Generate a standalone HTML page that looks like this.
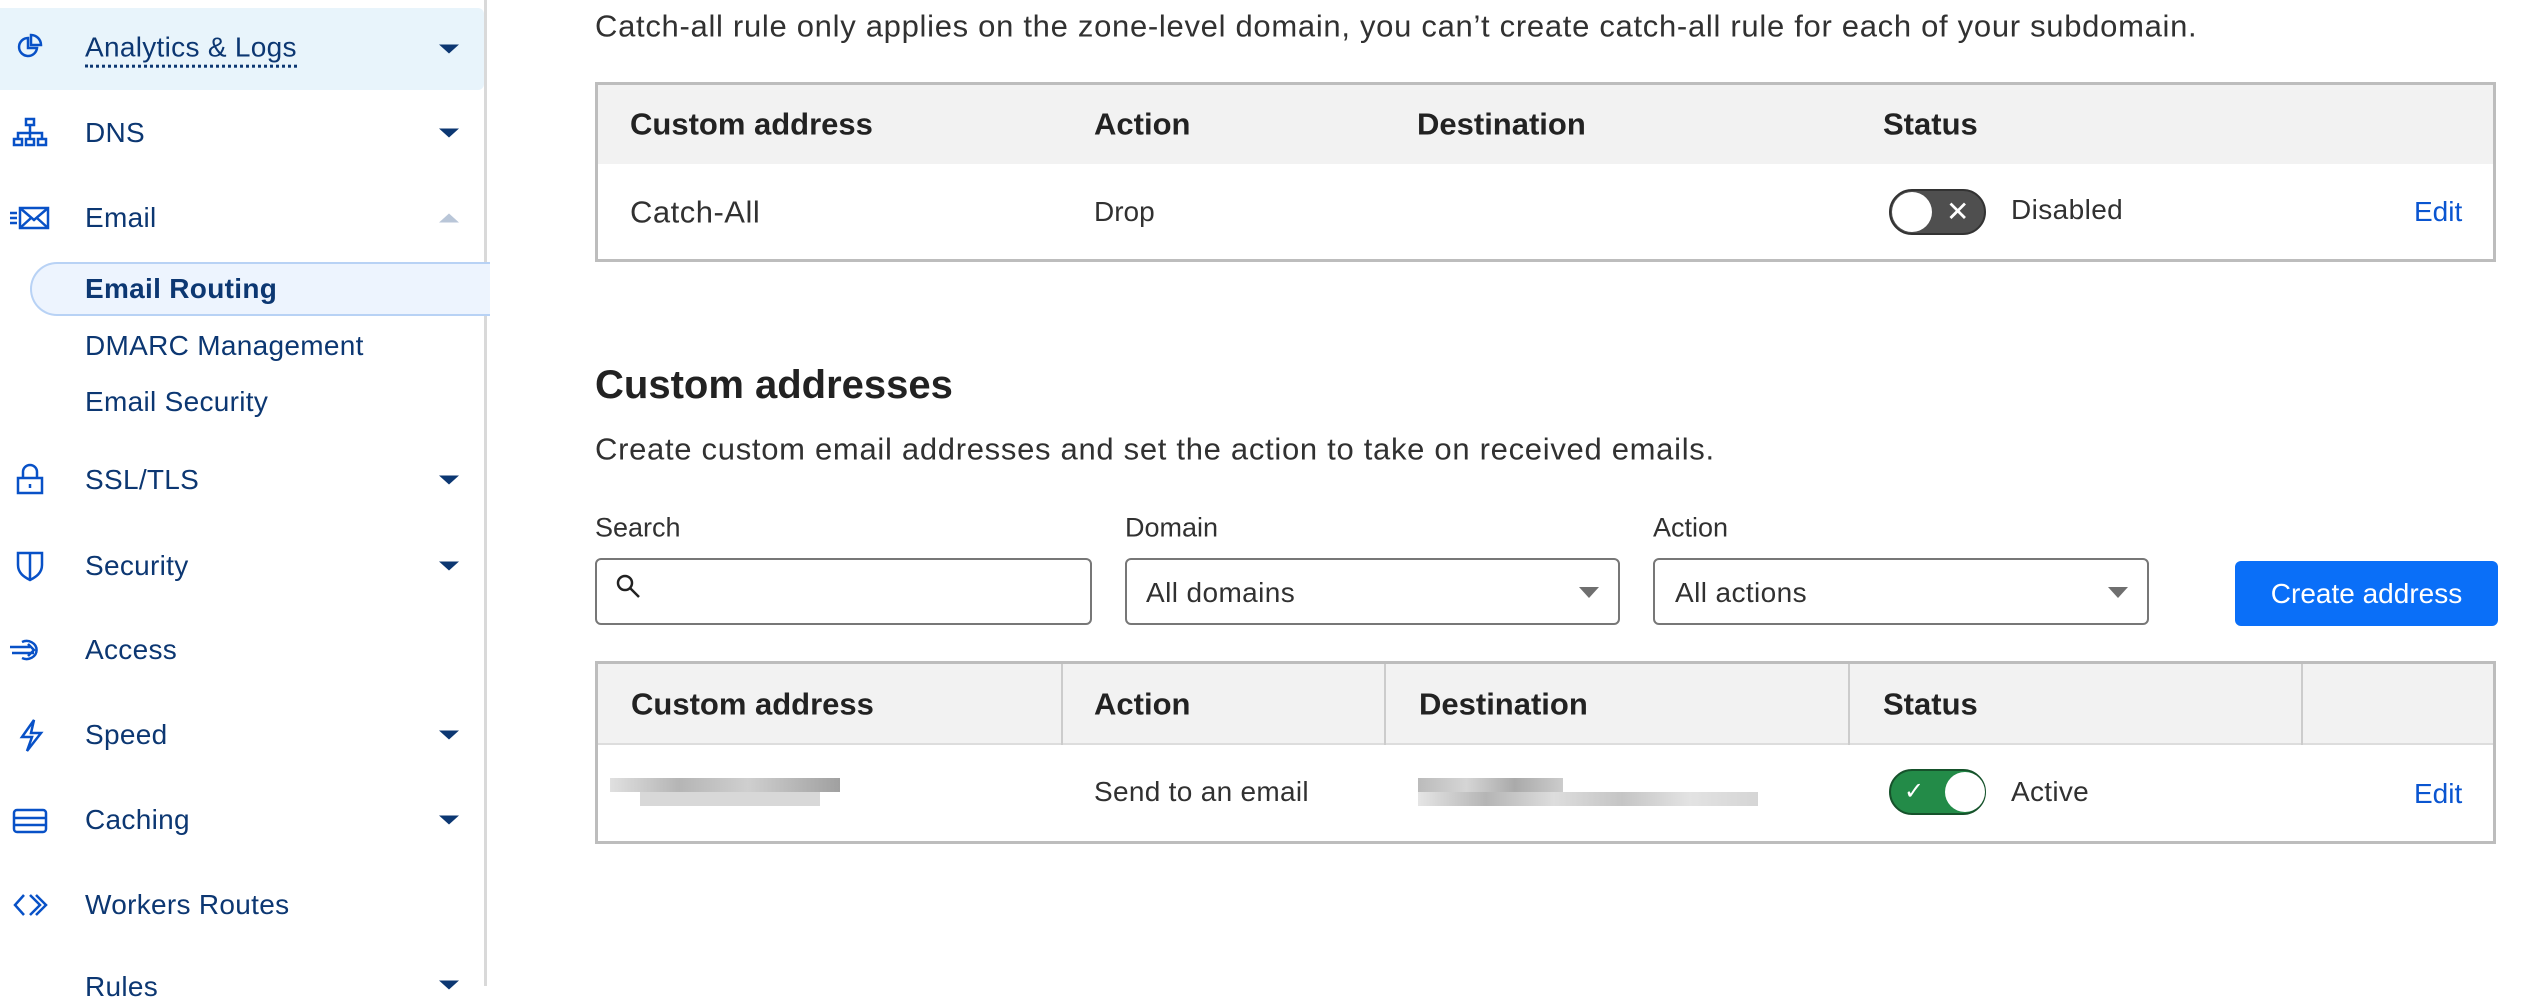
<!DOCTYPE html>
<html><head><meta charset="utf-8"><style>
*{margin:0;padding:0;box-sizing:border-box}
body{width:2546px;height:986px;overflow:hidden;background:#fff;font-family:"Liberation Sans",sans-serif;color:#313131;position:relative}
.a{position:absolute;white-space:nowrap}
.side{position:absolute;left:0;top:0;width:487px;height:986px;border-right:3px solid #d9d9d9;background:#fff}
.si{position:absolute;left:85px;font-size:28px;color:#0c3772;line-height:1;transform:translateY(-50%);letter-spacing:.3px}
.ic{position:absolute;left:12px;width:36px;height:36px;transform:translateY(-50%)}
.car{position:absolute;left:439px;width:0;height:0;border-left:10px solid transparent;border-right:10px solid transparent;border-top:9px solid #0c3772;transform:translateY(-50%)}
.t{font-size:29px;line-height:1;transform:translateY(-50%)}
.big{font-size:31px;letter-spacing:.7px}
.hd{font-size:31px;font-weight:600;color:#222}
.box{position:absolute;border:3px solid #bdbdbd}
.inp{position:absolute;border:2px solid #777;border-radius:6px;height:67px}
.tri{position:absolute;width:0;height:0;border-left:10px solid transparent;border-right:10px solid transparent;border-top:11px solid #6f6f6f}
.blur{position:absolute;height:14px;background:#c9c9c9}
</style></head><body>
<div class="side">
 <div class="a" style="left:0;top:8px;width:484px;height:82px;background:#e8f4fb;border-radius:0 6px 6px 0"></div>
 <div class="si" style="top:49px;border-bottom:3px dotted #0c3772;padding-bottom:3px;transform:translateY(-45%)">Analytics &amp; Logs</div>
 <svg class="ic" style="top:46px" viewBox="0 0 36 36" fill="none" stroke="#0851c7" stroke-width="2.5"><path d="M16 10a9 9 0 1 0 9 10H16z"/><path d="M19 7a10 10 0 0 1 10 10H19z"/></svg>
 <div class="car" style="top:49px"></div>
 <div class="si" style="top:133px">DNS</div>
 <svg class="ic" style="top:133px" viewBox="0 0 36 36" fill="none" stroke="#0851c7" stroke-width="2.5"><rect x="14" y="4" width="8" height="6"/><rect x="2" y="24" width="8" height="6"/><rect x="14" y="24" width="8" height="6"/><rect x="26" y="24" width="8" height="6"/><path d="M18 10v14M6 24v-6h24v6"/></svg>
 <div class="car" style="top:133px"></div>
 <div class="si" style="top:218px">Email</div>
 <svg class="ic" style="top:218px;left:8px;width:44px" viewBox="0 0 44 36" fill="none" stroke="#0851c7" stroke-width="2.5"><rect x="12" y="8" width="28" height="20"/><path d="M12 8l14 12 14-12M12 28l11-10M40 28L29 18M2 13h7M2 18h7M2 23h7"/></svg>
 <div class="car" style="top:218px;border-top:none;border-bottom:9px solid #b9c6d8"></div>
 <div class="a" style="left:30px;top:262px;width:460px;height:54px;background:#edf4fe;border:2px solid #b8d2f5;border-right:none;border-radius:27px 0 0 27px"></div>
 <div class="si" style="top:289px;font-weight:bold">Email Routing</div>
 <div class="si" style="top:346px">DMARC Management</div>
 <div class="si" style="top:402px">Email Security</div>
 <div class="si" style="top:480px">SSL/TLS</div>
 <svg class="ic" style="top:480px" viewBox="0 0 36 36" fill="none" stroke="#0851c7" stroke-width="2.5"><rect x="6" y="16" width="24" height="15"/><path d="M11 16V10a7 7 0 0 1 14 0v6M18 22v4"/></svg>
 <div class="car" style="top:480px"></div>
 <div class="si" style="top:566px">Security</div>
 <svg class="ic" style="top:566px" viewBox="0 0 36 36" fill="none" stroke="#0851c7" stroke-width="2.5"><path d="M6 5h24v12c0 8-6 12-12 15C12 29 6 25 6 17z M18 5v27"/></svg>
 <div class="car" style="top:566px"></div>
 <div class="si" style="top:650px">Access</div>
 <svg class="ic" style="top:650px;left:8px;width:40px" viewBox="0 0 40 36" fill="none" stroke="#0851c7" stroke-width="2.5"><path d="M14 10a10 9 0 1 1 0 16M2 15h20M4 21h22M20 12l6 6-6 6"/></svg>
 <div class="si" style="top:735px">Speed</div>
 <svg class="ic" style="top:735px" viewBox="0 0 36 36" fill="none" stroke="#0851c7" stroke-width="2.5"><path d="M22 3L10 20h10l-5 14 14-18H19z"/></svg>
 <div class="car" style="top:735px"></div>
 <div class="si" style="top:820px">Caching</div>
 <svg class="ic" style="top:820px" viewBox="0 0 36 36" fill="none" stroke="#0851c7" stroke-width="2.5"><rect x="2" y="8" width="32" height="22" rx="3"/><path d="M2 16h32M2 23h32"/></svg>
 <div class="car" style="top:820px"></div>
 <div class="si" style="top:905px">Workers Routes</div>
 <svg class="ic" style="top:905px" viewBox="0 0 36 36" fill="none" stroke="#0851c7" stroke-width="2.5"><path d="M12 8L3 18l9 10M18 8l10 10-10 10M24 8l10 10-10 10"/></svg>
 <div class="si" style="top:987px">Rules</div>
 <div class="car" style="top:985px"></div>
</div>

<div class="a t big" style="left:595px;top:26px">Catch-all rule only applies on the zone-level domain, you can’t create catch-all rule for each of your subdomain.</div>

<div class="box" style="left:595px;top:82px;width:1901px;height:180px"></div>
<div class="a" style="left:598px;top:85px;width:1895px;height:79px;background:#f2f2f2"></div>
<div class="a t hd" style="left:630px;top:124px">Custom address</div>
<div class="a t hd" style="left:1094px;top:124px">Action</div>
<div class="a t hd" style="left:1417px;top:124px">Destination</div>
<div class="a t hd" style="left:1883px;top:124px">Status</div>
<div class="a t" style="left:630px;top:212px;font-size:31px;letter-spacing:.5px">Catch-All</div>
<div class="a t" style="left:1094px;top:212px;font-size:28px">Drop</div>
<div class="a" style="left:1889px;top:189px;width:97px;height:46px;border-radius:23px;background:#4f4f4f;border:2px solid #333"></div>
<div class="a" style="left:1892px;top:192px;width:40px;height:40px;border-radius:50%;background:#fff"></div>
<div class="a t" style="left:1946px;top:212px;color:#fff;font-size:28px">✕</div>
<div class="a t" style="left:2011px;top:210px;font-size:28px;letter-spacing:.4px">Disabled</div>
<div class="a t" style="left:2414px;top:212px;color:#0a55d0;font-size:28px">Edit</div>

<div class="a t" style="left:595px;top:385px;font-size:40px;font-weight:600;color:#222">Custom addresses</div>
<div class="a t big" style="left:595px;top:449px">Create custom email addresses and set the action to take on received emails.</div>
<div class="a t" style="left:595px;top:528px;font-size:27px">Search</div>
<div class="a t" style="left:1125px;top:528px;font-size:27px">Domain</div>
<div class="a t" style="left:1653px;top:528px;font-size:27px">Action</div>
<div class="inp" style="left:595px;top:558px;width:497px"></div>
<svg class="a" style="left:614px;top:572px" width="30" height="30" viewBox="0 0 30 30" fill="none" stroke="#222" stroke-width="2.5"><circle cx="11" cy="11" r="7"/><path d="M16 16l9 9"/></svg>
<div class="inp" style="left:1125px;top:558px;width:495px"></div>
<div class="a t" style="left:1146px;top:593px;font-size:28px;letter-spacing:.4px">All domains</div>
<div class="tri" style="left:1579px;top:587px"></div>
<div class="inp" style="left:1653px;top:558px;width:496px"></div>
<div class="a t" style="left:1675px;top:593px;font-size:28px;letter-spacing:.4px">All actions</div>
<div class="tri" style="left:2108px;top:587px"></div>
<div class="a" style="left:2235px;top:561px;width:263px;height:65px;background:#0a6ff8;border-radius:6px;color:#fff;font-size:28px;text-align:center;line-height:65px">Create address</div>

<div class="box" style="left:595px;top:661px;width:1901px;height:183px"></div>
<div class="a" style="left:598px;top:664px;width:1895px;height:81px;background:#f2f2f2;border-bottom:2px solid #ddd"></div>
<div class="a" style="left:1061px;top:664px;width:2px;height:81px;background:#ccc"></div>
<div class="a" style="left:1384px;top:664px;width:2px;height:81px;background:#ccc"></div>
<div class="a" style="left:1848px;top:664px;width:2px;height:81px;background:#ccc"></div>
<div class="a" style="left:2301px;top:664px;width:2px;height:81px;background:#ccc"></div>
<div class="a t hd" style="left:631px;top:704px">Custom address</div>
<div class="a t hd" style="left:1094px;top:704px">Action</div>
<div class="a t hd" style="left:1419px;top:704px">Destination</div>
<div class="a t hd" style="left:1883px;top:704px">Status</div>
<div class="blur" style="left:610px;top:778px;width:230px;background:linear-gradient(90deg,#e0e0e0,#b5b5b5 30%,#cfcfcf 60%,#a0a0a0)"></div>
<div class="blur" style="left:640px;top:792px;width:180px;background:#d8d8d8"></div>
<div class="a t" style="left:1094px;top:792px;font-size:28px;letter-spacing:.3px">Send to an email</div>
<div class="blur" style="left:1418px;top:778px;width:145px;background:linear-gradient(90deg,#bbb,#d5d5d5,#aaa,#ccc)"></div>
<div class="blur" style="left:1418px;top:792px;width:340px;background:linear-gradient(90deg,#e5e5e5,#b5b5b5 20%,#ddd 40%,#c5c5c5 60%,#e3e3e3 80%,#d5d5d5)"></div>
<div class="a" style="left:1889px;top:769px;width:97px;height:46px;border-radius:23px;background:#238b48;border:2px solid #16522b"></div>
<div class="a" style="left:1945px;top:772px;width:40px;height:40px;border-radius:50%;background:#fff"></div>
<div class="a t" style="left:1904px;top:792px;color:#fff;font-size:24px">✓</div>
<div class="a t" style="left:2011px;top:792px;font-size:28px;letter-spacing:.3px">Active</div>
<div class="a t" style="left:2414px;top:794px;color:#0a55d0;font-size:28px">Edit</div>
</body></html>
